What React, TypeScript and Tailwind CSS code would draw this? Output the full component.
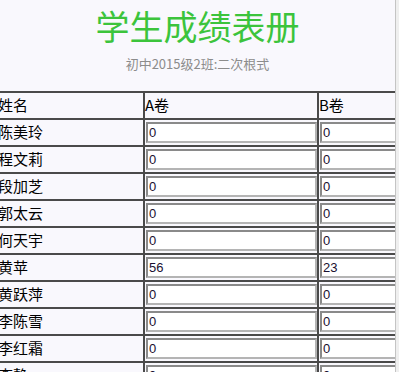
import React from 'react';

const students: { name: string; a: string; b: string }[] = [
  { name: '陈美玲', a: '0', b: '0' },
  { name: '程文莉', a: '0', b: '0' },
  { name: '段加芝', a: '0', b: '0' },
  { name: '郭太云', a: '0', b: '0' },
  { name: '何天宇', a: '0', b: '0' },
  { name: '黄苹', a: '56', b: '23' },
  { name: '黄跃萍', a: '0', b: '0' },
  { name: '李陈雪', a: '0', b: '0' },
  { name: '李红霜', a: '0', b: '0' },
  { name: '李静', a: '0', b: '0' },
];

const cell = 'border-2 border-[#4a4a4a] p-0 h-[27px] align-middle';

const ScoreInput: React.FC<{ value: string }> = ({ value }) => (
  <input
    defaultValue={value}
    className="block mx-[1px] w-[171px] h-[21px] bg-white border-2 border-t-[#8a8a8a] border-l-[#8a8a8a] border-b-[#b4b4b4] border-r-[#b4b4b4] px-[1px] text-[13px] text-[#1a1030] outline-none"
    style={{ fontFamily: '"Liberation Sans", Arial, sans-serif' }}
  />
);

export default function App() {
  return (
    <div className="flex h-[372px] w-[399px] overflow-hidden bg-[#f9f8fd]">
      <div className="w-[395px] shrink-0 overflow-hidden">
        <div className="pt-[7px] text-center" style={{ fontFamily: '"Noto Sans CJK SC", "Noto Sans", sans-serif' }}>
          <h1 className="text-[34px] leading-[38px] text-[#3cc43c] font-normal">学生成绩表册</h1>
          <p className="mt-[10px] text-[13px] leading-[18px] text-[#8c8c8c]">初中2015级2班:二次根式</p>
        </div>
        <table
          className="mt-[18px] ml-[-8px] table-fixed border-collapse text-[15px] text-black"
          style={{ fontFamily: '"Noto Sans CJK SC", sans-serif', width: 600 }}
        >
          <colgroup>
            <col style={{ width: 151 }} />
            <col style={{ width: 174 }} />
            <col style={{ width: 275 }} />
          </colgroup>
          <tbody>
            <tr>
              <td className={`${cell} pl-[4px]`}>姓名</td>
              <td className={cell}>A卷</td>
              <td className={cell}>B卷</td>
            </tr>
            {students.map(s => (
              <tr key={s.name}>
                <td className={`${cell} pl-[4px]`}>{s.name}</td>
                <td className={cell}><ScoreInput value={s.a} /></td>
                <td className={cell}><ScoreInput value={s.b} /></td>
              </tr>
            ))}
          </tbody>
        </table>
      </div>
      <div className="w-[4px] shrink-0 border-l border-[#c4c4c4] bg-[#efefef]" />
    </div>
  );
}
